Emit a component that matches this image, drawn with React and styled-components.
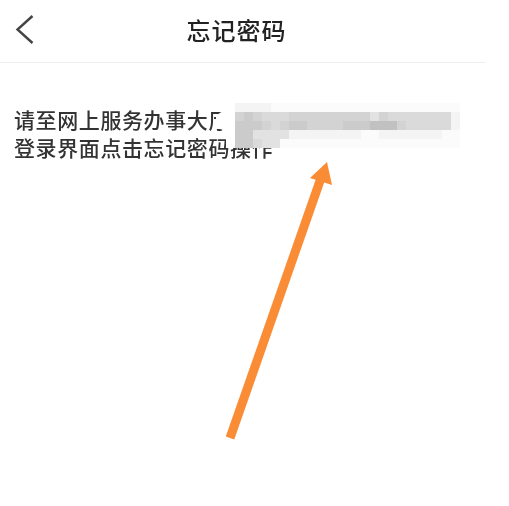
import React from "react";
import styled, { createGlobalStyle } from "styled-components";

const GlobalStyle = createGlobalStyle`
  html, body {
    margin: 0;
    padding: 0;
    background: #fff;
  }
`;

const Page = styled.div`
  position: relative;
  width: 509px;
  height: 506px;
  overflow: hidden;
  background: #fff;
  font-family: "Noto Sans CJK SC", "Noto Sans", sans-serif;
`;

const Header = styled.header`
  display: grid;
  grid-template-columns: 1fr auto 1fr;
  align-items: center;
  width: 486px;
  height: 63px;
  box-sizing: border-box;
  padding: 0 28px 2px 15px;
  border-bottom: 1px solid #efefef;
`;

const BackIcon = styled.svg`
  display: block;
  width: 20px;
  height: 32px;
`;

const Title = styled.h1`
  margin: 0;
  font-size: 24px;
  line-height: 30px;
  font-weight: 500;
  letter-spacing: 1px;
  color: #222;
  filter: blur(0.3px);
`;

const Message = styled.p`
  margin: 0;
  padding: 42px 0 0 14px;
  width: 460px;
  font-size: 21px;
  line-height: 28px;
  font-weight: 500;
  letter-spacing: 0.6px;
  color: #333;
  filter: blur(0.35px);
`;

const Mosaic = styled.div`
  position: absolute;
  left: 226px;
  top: 103px;
  display: grid;
  grid-template-columns: repeat(26, 9px);
  grid-auto-rows: 9px;
  filter: blur(0.5px);
`;

const MosaicCell = styled.i`
  display: block;
  background: ${(p) => p.$shade};
`;

// white smear left of the mosaic, it hides the inside of the last character
const Smear = styled.div`
  position: absolute;
  left: 216px;
  top: 100px;
  width: 22px;
  height: 34px;
  background: #fff;
  clip-path: polygon(100% 0, 0 46%, 0 82%, 100% 100%);
`;

const ArrowIcon = styled.svg`
  position: absolute;
  left: 0;
  top: 0;
  width: 509px;
  height: 506px;
  pointer-events: none;
`;

// greys of the blurred out area, one character per 9px cell
const SHADES = {
  w: "#ffffff",
  a: "#fbfbfb",
  b: "#f4f4f4",
  c: "#ececec",
  d: "#e2e2e2",
  e: "#dadada",
  f: "#d3d3d3",
  g: "#cbcbcb",
  h: "#c1c1c1",
};

const ROWS = [
  "wbbbbaaaaaaaaaaaaaaaaaaaaa",
  "wfgfeeefffffffffdfeeeeeeeb",
  "wgggfefggffffggghhhfeeeeeb",
  "wggddddbbbbbbbbaabbbbbbbaa",
  "wggedda" + "aaaaaaaaaaaaaaaaaaa",
];

export default function App() {
  return (
    <Page>
      <GlobalStyle />
      <Header>
        <BackIcon viewBox="0 0 20 32">
          <path d="M17.5 2 L2.5 15.5 L17.5 29" fill="none" stroke="#444" strokeWidth="2.4" />
        </BackIcon>
        <Title>忘记密码</Title>
      </Header>
      <Message>
        请至网上服务办事大厅
        <br />
        登录界面点击忘记密码操作
      </Message>
      <Smear />
      <Mosaic>
        {ROWS.flatMap((row, r) =>
          row.split("").map((key, c) => <MosaicCell key={`${r}-${c}`} $shade={SHADES[key]} />)
        )}
      </Mosaic>
      <ArrowIcon viewBox="0 0 509 506">
        <path d="M230 438 L321 178" fill="none" stroke="#fb8c36" strokeWidth="9" />
        <path d="M327 162 L310 178 L332 185 Z" fill="#fb8c36" />
      </ArrowIcon>
    </Page>
  );
}
